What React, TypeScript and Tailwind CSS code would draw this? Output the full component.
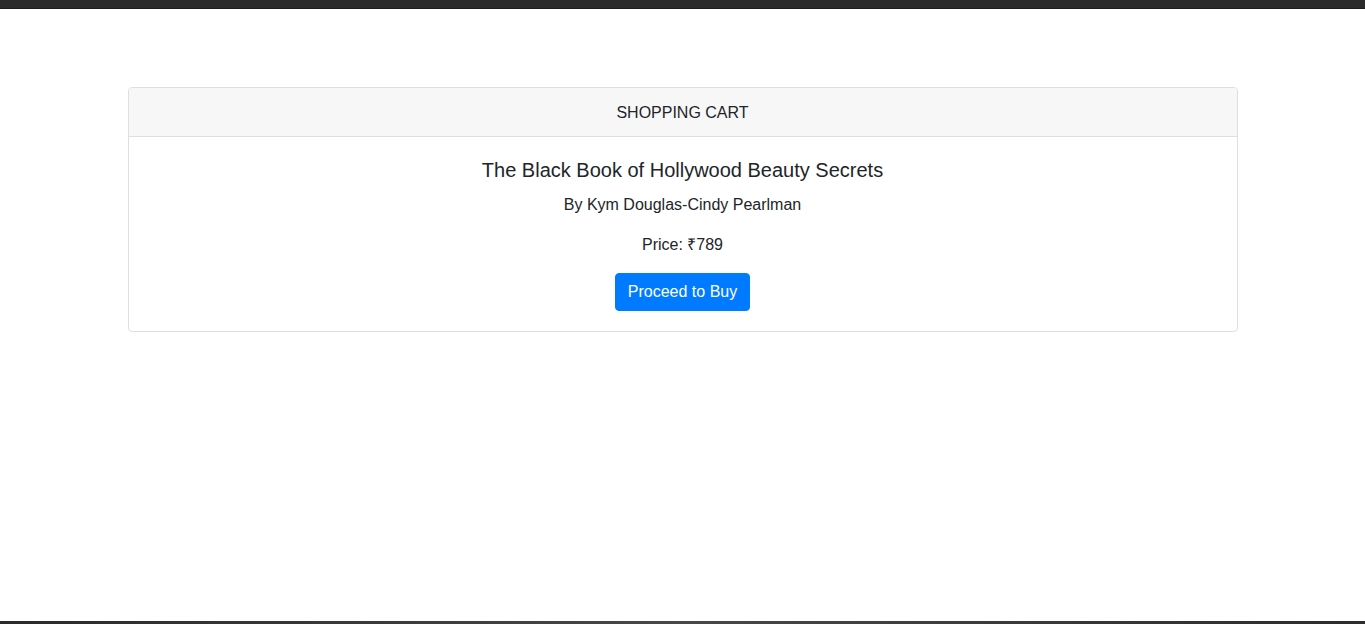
export default function App() {
  return (
    <div className="min-h-screen flex flex-col bg-white text-[#212529] font-['Liberation_Sans',Arial,sans-serif]">
      {/* Top strip */}
      <div className="h-[9px] bg-[#2b2b2b] border-b border-[#1c1c1c]" />

      <main className="flex-1 px-[15px] pt-[78px]">
        <div className="max-w-[1110px] mx-auto border border-[#dfdfdf] rounded-[4px] overflow-hidden">
          <div className="bg-[#f7f7f7] border-b border-[#dfdfdf] pt-[13px] pb-[11px] text-center text-base leading-6">
            SHOPPING CART
          </div>
          <div className="px-5 pt-[21px] pb-5 flex flex-col items-center text-center">
            <h5 className="text-[20px] leading-6">The Black Book of Hollywood Beauty Secrets</h5>
            <p className="mt-[11px] text-base leading-6">By Kym Douglas-Cindy Pearlman</p>
            <p className="mt-4 text-base leading-6">Price: ₹789</p>
            <button className="mt-4 bg-[#007bff] text-white text-base leading-6 px-3 py-[6px] border border-[#007bff] rounded-[4px]">
              Proceed to Buy
            </button>
          </div>
        </div>
      </main>

      {/* Bottom strip */}
      <div className="h-[3px] bg-gradient-to-r from-[#2a2a2c] via-[#4a4748] to-[#2c2b2e]" />
    </div>
  )
}
